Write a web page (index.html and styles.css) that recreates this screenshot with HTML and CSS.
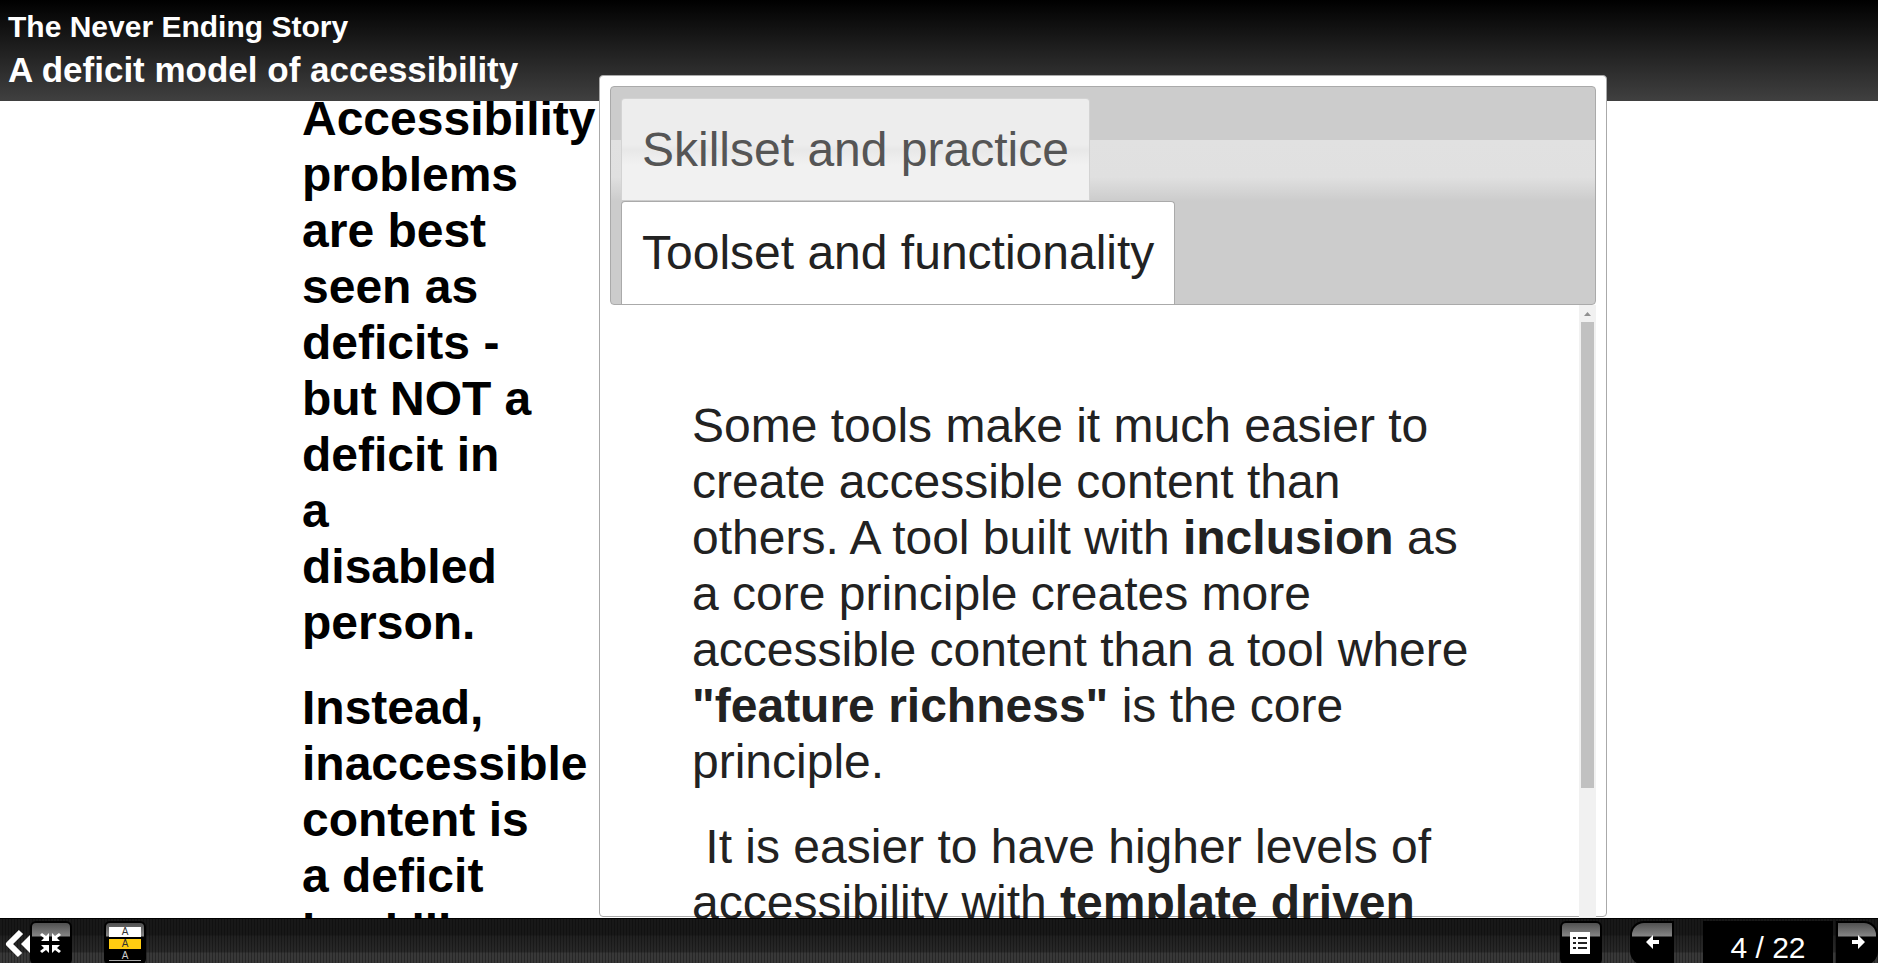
FILE: index.html
```
<!DOCTYPE html>
<html lang="en">
    <head>
        <meta charset="UTF-8">
        <title>The Never Ending Story</title>
        <link rel="stylesheet" href="styles.css">
    </head>
    <body>
        <header class="header">
            <h1>The Never Ending Story</h1>
            <h2>A deficit model of accessibility</h2>
        </header>

        <main class="main">
            <section class="story">
                <p>Accessibility<br>problems<br>are best<br>seen as<br>deficits -<br>but NOT a<br>deficit in<br>a<br>disabled<br>person.</p>
                <p>Instead,<br>inaccessible<br>content is<br>a deficit<br>in skills</p>
            </section>

            <section class="panel">
                <div class="tabs" role="tablist">
                    <button class="tab" role="tab" id="tab-skill">Skillset and practice</button>
                    <button class="tab active" role="tab" id="tab-tool" aria-selected="true">Toolset and functionality</button>
                </div>
                <div class="tab-body">
                    <div class="tab-text" role="tabpanel" aria-labelledby="tab-tool">
                        <p>Some tools make it much easier to<br>create accessible content than<br>others. A tool built with <b>inclusion</b> as<br>a core principle creates more<br>accessible content than a tool where<br><b>"feature richness"</b> is the core<br>principle.</p>
                        <p>&nbsp;It is easier to have higher levels of<br>accessibility with <b>template driven</b></p>
                    </div>
                    <div class="scrollbar">
                        <svg class="scroll-up" viewBox="0 0 17 17"><path d="M5 11h7L8.500 7z" fill="#909090"/></svg>
                        <div class="scroll-thumb"></div>
                    </div>
                </div>
            </section>
        </main>

        <footer class="footer">
            <div class="tools">
                <button class="chevron" aria-label="Hide tools">
                    <svg width="30" height="40" viewBox="0 0 30 40"><path d="M21 9L9 21l11 11" fill="none" stroke="#fff" stroke-width="6" stroke-linejoin="round"/><path d="M30 12v18l-9-9z" fill="#fff"/></svg>
                </button>
                <button class="icon" aria-label="Exit full screen">
                    <svg width="38" height="41" viewBox="0 0 38 41"><g fill="#fff"><path d="M17 10v8H9l3-3-4-3 2-2 4 3z"/><path d="M20 10v8h8l-3-3 4-3-2-2-4 3z"/><path d="M17 30v-8H9l3 3-4 3 2 2 4-3z"/><path d="M20 30v-8h8l-3 3 4 3-2 2-4-3z"/></g></svg>
                </button>
                <button class="icon contrast" aria-label="Change colours">
                    <span class="swatch white">A</span>
                    <span class="swatch yellow">A</span>
                    <span class="swatch black">A</span>
                </button>
            </div>
            <nav class="pages">
                <button class="icon toc" aria-label="Table of contents">
                    <svg width="38" height="41" viewBox="0 0 38 41"><path d="M8 9h20v22H8z" fill="#fff"/><path d="M11 15h3M11 20h3M11 25h3M16 15h9M16 20h9M16 25h9" stroke="#222" stroke-width="2"/></svg>
                </button>
                <button class="icon prev" aria-label="Previous page">
                    <svg width="40" height="41" viewBox="0 0 40 41"><path d="M14 19l7-7v5h6v4h-6v5z" fill="#fff"/></svg>
                </button>
                <span class="count">4 / 22</span>
                <button class="icon next" aria-label="Next page">
                    <svg width="40" height="41" viewBox="0 0 40 41"><path d="M27 19l-7-7v5h-6v4h6v5z" fill="#fff"/></svg>
                </button>
            </nav>
        </footer>
    </body>
</html>
```
FILE: styles.css
```
*{
    box-sizing:border-box;
}

body{
    margin:0;
    height:100vh;
    display:flex;
    flex-direction:column;
    overflow:hidden;
    background-color:#fff;
    color:#000;
    font-family:"Liberation Sans", Arial, sans-serif;
}

button{
    margin:0;
    padding:0;
    border:none;
    background:none;
    color:inherit;
    font:inherit;
}

svg{
    display:block;
}

.header{
    flex:none;
    padding:8px 8px 7px;
    background:linear-gradient(#000, #404040);
    color:#fff;
}

.header h1{
    margin:0;
    font-size:30px;
    line-height:38px;
}

.header h2{
    margin:0;
    font-size:35px;
    line-height:48px;
}

.main{
    flex:1;
    min-height:0;
    display:flex;
    padding:0 271px 0 302px;
}

.story{
    flex:none;
    width:297px;
    overflow:hidden;
    font-size:48px;
    font-weight:bold;
    line-height:56px;
}

.story p{
    margin:-10px 0 39px;
}

/* floats up over the header */
.panel{
    flex:1;
    min-width:0;
    display:flex;
    flex-direction:column;
    margin:-26px 0 1px;
    padding:10px 10px 0;
    border:1px solid #aaa;
    border-radius:4px;
    background-color:#fff;
    color:#222;
    font-size:48px;
    line-height:56px;
}

.tabs{
    flex:none;
    display:flex;
    flex-direction:column;
    align-items:flex-start;
    gap:1px;
    padding:11px 10px 0;
    border:1px solid #aaa;
    border-radius:4px;
    background:linear-gradient(#ccc 53px, #e1e1e1 53px, #e0e0e0 90px, #ccc 114px);
}

.tab{
    height:102px;
    padding:0 20px;
    border:1px solid #d3d3d3;
    border-bottom:none;
    border-radius:4px 4px 0 0;
    background:linear-gradient(#ededed 45%, #e8e8e8 50%, #f1f1f1 65%);
    color:#555;
    white-space:nowrap;
}

.tab.active{
    height:103px;
    border-color:#aaa;
    background:#fff;
    color:#222;
}

.tab-body{
    flex:1;
    min-height:0;
    display:flex;
    margin-bottom:-2px;
    overflow:hidden;
}

.tab-text{
    flex:1;
    min-width:0;
    padding:93px 0 0 82px;
    white-space:nowrap;
}

.tab-text p{
    margin:0 0 29px;
}

.scrollbar{
    flex:none;
    width:17px;
    background-color:#f1f1f1;
}

.scroll-thumb{
    height:76%;
    margin:0 2px;
    background-color:#c1c1c1;
}

.footer{
    flex:none;
    height:45px;
    display:flex;
    justify-content:space-between;
    align-items:flex-start;
    padding-top:2px;
    border-top:1px solid #000;
    background:
        repeating-linear-gradient(90deg, transparent 0 2px, rgba(0,0,0,0.3) 2px 3px),
        linear-gradient(#181818 0 16px, #202020 17px, #282828 33px, #383838 34px);
    color:#fff;
}

.tools, .pages{
    display:flex;
}

.icon{
    width:42px;
    height:44px;
    padding:0;
    border:2px solid #000;
    border-radius:6px;
    background:linear-gradient(#505050, #858585 13px, #000 14px);
}

.contrast{
    display:flex;
    flex-direction:column;
    gap:2px;
    margin-left:32px;
    padding:4px 3px;
}

.swatch{
    width:32px;
    height:10px;
    color:#333;
    font-size:10px;
    line-height:10px;
}

.white{
    background-color:#fff;
}

.yellow{
    background-color:#fc1;
}

.black{
    border-bottom:1px solid #aaa;
    color:#ccc;
}

.prev{
    width:44px;
    margin-left:28px;
    border-radius:14px 0 0 14px;
}

.next{
    border-radius:0 14px 14px 0;
}

.count{
    width:130px;
    height:44px;
    margin-left:29px;
    margin-right:3px;
    background-color:#000;
    font-size:30px;
    line-height:54px;
    text-align:center;
}
```
